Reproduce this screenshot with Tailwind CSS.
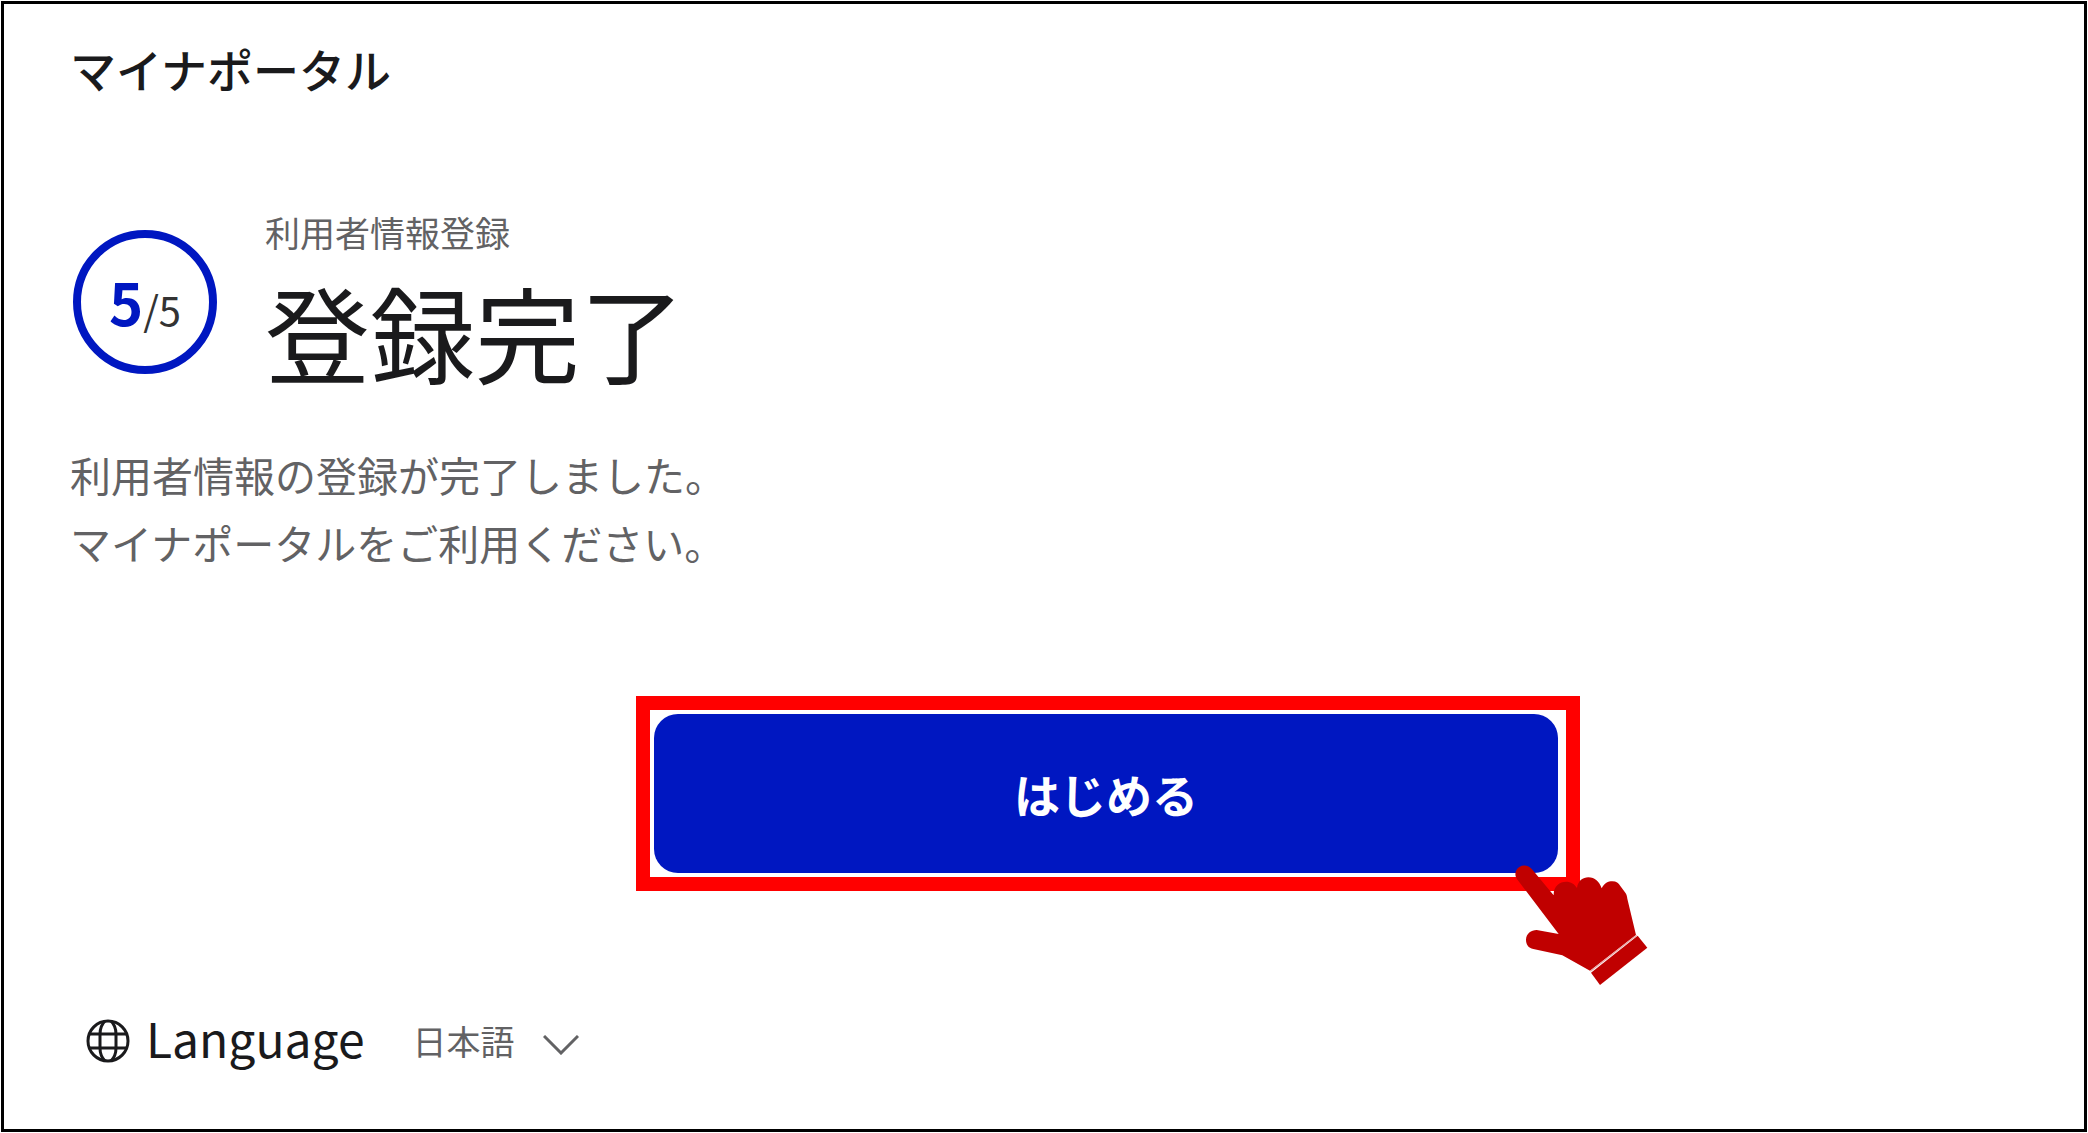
<!DOCTYPE html>
<html lang="ja">
<head>
<meta charset="utf-8">
<meta name="viewport" content="width=device-width, initial-scale=1">
<title>マイナポータル</title>
<script src="https://cdn.jsdelivr.net/npm/@tailwindcss/browser@4"></script>
</head>
<body class="bg-white font-['Noto_Sans_CJK_JP',sans-serif] text-[#1a1a1c]">
<div class="min-h-screen p-px flex">
<div class="flex-1 flex flex-col border-3 border-black">
  <header class="px-[66px] pt-7">
    <p class="text-[46px] leading-[72px] font-medium">マイナポータル</p>
  </header>

  <main class="pt-[100px]">
    <div class="px-[69px] flex items-start gap-12">
      <div class="mt-[26px] size-36 shrink-0 rounded-full border-8 border-[#0017c1] flex items-baseline justify-center leading-[126px]">
        <span class="text-[58px] font-bold text-[#0017c1]">5</span><span class="text-[40px] text-[#333]">/5</span>
      </div>
      <div>
        <p class="mt-0.5 text-[35px] leading-[52px] text-[#626264]">利用者情報登録</p>
        <h1 class="text-[105px] leading-[144px]">登録完了</h1>
      </div>
    </div>

    <p class="px-[66px] mt-[38px] text-[41px] leading-[68px] text-[#626264]">利用者情報の登録が完了しました。<br>マイナポータルをご利用ください。</p>

    <div class="mt-30 grid grid-cols-[632fr_944fr_504fr]">
      <div class="col-start-2 relative">
        <div class="border-14 border-[#ff0000] py-1 pl-1 pr-2">
          <button type="button" class="block w-full h-[159px] rounded-3xl bg-[#0017c1] text-white text-[46px] font-bold">はじめる</button>
        </div>
        <svg class="absolute -right-[72px] -bottom-[94px] w-[140px] h-[120px]" viewBox="96 105 420 360" aria-hidden="true">
          <path fill="#c00000" d="M113 150C101 135 106 119 118 111C131 103 147 107 156 118L221 196C220 169 239 155 258 155C273 155 284 162 291 174C294 152 309 142 325 142C345 142 357 154 365 175C373 159 384 154 397 154C409 154 416 160 421 168L436 188C440 193 441 199 442 206L468 315L330 422L247 376L160 357C145 354 138 343 138 329C139 311 153 300 170 300L236 312Z"/>
          <path fill="#c00000" d="M473 317L502 353L360 465L333 428Z"/>
          <path fill="none" stroke="#e9a5a5" stroke-width="4" d="M331 424L470 316"/>
        </svg>
      </div>
    </div>
  </main>

  <footer class="mt-[106px] pl-[82px] pb-9 flex items-center">
    <svg class="size-11 mr-4" viewBox="0 0 44 44" fill="none" stroke="#1a1a1c" stroke-width="3" aria-hidden="true">
      <circle cx="22" cy="22" r="20"/>
      <path d="M4 15H40M4 29H40M19 2C16 5 14 10 14 15V29C14 34 16 39 19 42M25 2C28 5 30 10 30 15V29C30 34 28 39 25 42"/>
    </svg>
    <label for="lang" class="mb-2 text-[48px] leading-[80px]">Language</label>
    <div class="relative ml-12">
      <select id="lang" class="appearance-none bg-transparent text-[34px] leading-[52px] pr-16 text-[#626264]">
        <option>日本語</option>
      </select>
      <svg class="absolute right-0 top-5 w-9 h-5 pointer-events-none" viewBox="0 0 36 20" fill="none" stroke="#626264" stroke-width="3" aria-hidden="true"><path d="M1 1L18 18L35 1"/></svg>
    </div>
  </footer>
</div>
</div>
</body>
</html>
